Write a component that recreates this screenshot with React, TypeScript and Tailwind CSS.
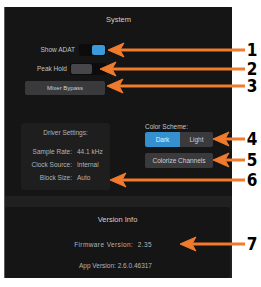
const callouts = [
  { n: '1', x: 108, y: 50 },
  { n: '2', x: 100, y: 69 },
  { n: '3', x: 107, y: 86 },
  { n: '4', x: 213, y: 139 },
  { n: '5', x: 213, y: 160 },
  { n: '6', x: 110, y: 180 },
  { n: '7', x: 180, y: 244 },
];

const driverRows = [
  ['Sample Rate:', '44.1 kHz'],
  ['Clock Source:', 'Internal'],
  ['Block Size:', 'Auto'],
];

function Callouts() {
  return (
    <>
      <svg className="pointer-events-none absolute left-0 top-0" width="261" height="287">
        {callouts.map((c) => (
          <g key={c.n} fill="#f07b2c" stroke="#f07b2c">
            <line x1={c.x + 10} y1={c.y} x2={245} y2={c.y} strokeWidth="3" />
            <path
              d={`M${c.x} ${c.y} L${c.x + 16} ${c.y - 7} L${c.x + 12} ${c.y} L${c.x + 16} ${c.y + 7} Z`}
              strokeWidth="1"
              strokeLinejoin="round"
            />
          </g>
        ))}
      </svg>
      {callouts.map((c) => (
        <span
          key={c.n}
          className="absolute left-[246px] w-[12px] text-center text-[17px] font-bold leading-[12px] text-black"
          style={{ top: c.y - 6, fontFamily: '"Liberation Sans Narrow", "DejaVu Sans Condensed", sans-serif' }}
        >
          {c.n}
        </span>
      ))}
    </>
  );
}

export default function App() {
  return (
    <div className="relative h-[287px] w-[261px] bg-white pt-[7px] font-['Liberation_Sans',sans-serif]">
      <div className="ml-[4px] flex w-[228px] flex-col border-l border-[#5a5a5a] bg-[#202020]">
        {/* System panel */}
        <div className="flex h-[189px] flex-col rounded-tr-[3px] bg-[#151515] pt-[8px]">
          <div className="h-[9px] text-center text-[7.5px] leading-[9px] text-[#cfcfcf]">System</div>

          <div className="mt-[20px] flex w-[101px] items-center justify-end gap-[4px]">
            <span className="text-[6.5px] leading-[8px] text-[#c4c4c4]">Show ADAT</span>
            <div className="flex h-[12px] w-[27px] justify-end rounded-[2px] bg-[#0c0c0c] p-[1px]">
              <div className="h-full w-[13px] rounded-[2px] bg-[#3b9ad8]" />
            </div>
          </div>

          <div className="mt-[7px] flex w-[101px] items-center justify-end gap-[3px]">
            <span className="text-[6.5px] leading-[8px] text-[#c4c4c4]">Peak Hold</span>
            <div className="flex h-[12px] w-[36px] rounded-[2px] bg-[#0c0c0c] p-[1px]">
              <div className="h-full w-[21px] rounded-[2px] bg-[#47474b]" />
            </div>
          </div>

          <div className="ml-[20px] mt-[6px] flex h-[14px] w-[80px] items-center justify-center rounded-[2px] bg-[#3a3a3c] text-[6px] text-[#cfcfcf]">
            Mixer Bypass
          </div>

          <div className="mt-[28px] flex items-start">
            <div className="ml-[16px] flex h-[67px] w-[89px] flex-col rounded-[3px] bg-[#1e1e1e] pt-[6px]">
              <div className="text-center text-[6.5px] leading-[8px] text-[#b4b4b4]">Driver Settings:</div>
              <div className="mt-[11px] grid grid-cols-[51px_auto] gap-x-[5px] gap-y-[5px] text-[6.5px] leading-[8px] text-[#b4b4b4]">
                {driverRows.map(([k, v]) => (
                  <div key={k} className="contents">
                    <span className="text-right">{k}</span>
                    <span>{v}</span>
                  </div>
                ))}
              </div>
            </div>

            <div className="ml-[35px] flex w-[68px] flex-col">
              <span className="text-[6.5px] leading-[8px] text-[#c4c4c4]">Color Scheme:</span>
              <div className="mt-[1px] flex h-[15px] text-[6.5px]">
                <div className="flex w-[35px] items-center justify-center rounded-l-[2px] bg-[#3590cf] text-[#e6f2fb]">Dark</div>
                <div className="flex flex-1 items-center justify-center rounded-r-[2px] bg-[#3a3a3c] text-[#cfcfcf]">Light</div>
              </div>
              <div className="mt-[6px] flex h-[15px] items-center justify-center rounded-[2px] bg-[#3a3a3c] text-[6.5px] text-[#cfcfcf]">
                Colorize Channels
              </div>
            </div>
          </div>
        </div>

        {/* Version panel */}
        <div className="mr-[2px] mt-[11px] flex h-[71px] flex-col rounded-[3px] bg-[#151515] pt-[8px]">
          <div className="h-[9px] text-center text-[7.5px] leading-[9px] text-[#cfcfcf]">Version Info</div>
          <div className="flex w-[147px] flex-col items-end text-[6.5px] leading-[8px] text-[#b4b4b4]">
            <span className="mt-[17px] tracking-[0.4px]">Firmware Version:&nbsp;&nbsp;2.35</span>
            <span className="mt-[13px]">App Version: 2.6.0.46317</span>
          </div>
        </div>
      </div>

      <Callouts />
    </div>
  );
}
